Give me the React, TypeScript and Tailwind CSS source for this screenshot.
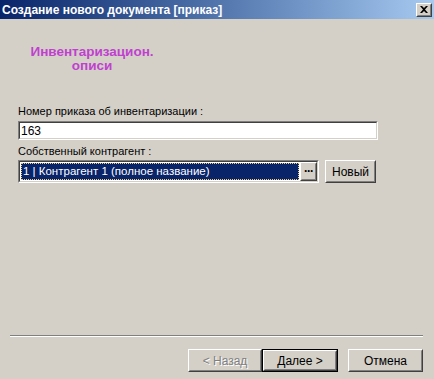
import React from 'react';

const font = { fontFamily: '"Liberation Sans", Arial, sans-serif' };

function Sunken({ className, children }: { className?: string; children: React.ReactNode }) {
    return (
        <div className={`border border-t-[#808080] border-l-[#808080] border-b-white border-r-white ${className ?? ''}`}>
            <div className="h-full border border-t-[#404040] border-l-[#404040] border-b-[#D4D0C8] border-r-[#D4D0C8]">
                {children}
            </div>
        </div>
    );
}

function Raised({ className, children }: { className?: string; children: React.ReactNode }) {
    return (
        <div className={`border border-t-white border-l-white border-b-[#404040] border-r-[#404040] ${className ?? ''}`}>
            <div className="h-full flex items-center justify-center border border-t-[#D4D0C8] border-l-[#D4D0C8] border-b-[#808080] border-r-[#808080]">
                {children}
            </div>
        </div>
    );
}

export default function App() {
    return (
        <div className="w-[434px] h-[379px] bg-[#D4D0C8] flex flex-col text-[11px] text-black" style={font}>
            <div className="h-[19px] flex items-center justify-between pl-[2px] pr-[2px] bg-gradient-to-r from-[#0A246A] to-[#A6CAF0]">
                <span className="text-white font-bold text-[12px] leading-none">Создание нового документа [приказ]</span>
                <Raised className="w-[16px] h-[14px] bg-[#D4D0C8]">
                    <svg width="8" height="7" viewBox="0 0 8 7">
                        <path d="M0 0h2l2 2 2-2h2L5 3.5 8 7H6L4 5 2 7H0l3-3.5z" fill="#000" />
                    </svg>
                </Raised>
            </div>

            <div className="w-[184px] mt-[26px] text-center font-bold text-[13.5px] leading-[14px] text-[#C040D0]">
                <div>Инвентаризацион.</div>
                <div>описи</div>
            </div>

            <div className="px-[18px] mt-[32px]">
                <div className="leading-[13px]">Номер приказа об инвентаризации :</div>
                <Sunken className="mt-[3px] w-[360px] h-[19px]">
                    <div className="h-full bg-white pl-[1px] flex items-center leading-none text-[12px]">163</div>
                </Sunken>

                <div className="leading-[13px] mt-[5px]">Собственный контрагент :</div>
                <div className="mt-[2px] flex items-center gap-[6px]">
                    <Sunken className="w-[301px] h-[23px]">
                        <div className="h-full flex bg-white">
                            <div className="flex-1 m-[1px] bg-[#0A246A] border border-dotted border-[#F0D080] text-white flex items-center pl-[1px] leading-none text-[11.5px]">
                                1 | Контрагент 1 (полное название)
                            </div>
                            <Raised className="w-[17px] h-full bg-[#D4D0C8]">
                                <span className="font-bold leading-none tracking-[-1px] -mt-[2px] text-[12px]">···</span>
                            </Raised>
                        </div>
                    </Sunken>
                    <Raised className="w-[51px] h-[23px] bg-[#D4D0C8]">
                        <span className="leading-none text-[12px]">Новый</span>
                    </Raised>
                </div>
            </div>

            <div className="mt-auto pl-[10px] pr-[11px]">
                <div className="border-t border-t-[#808080] border-b border-b-white" />
            </div>
            <div className="mt-[12px] mb-[7px] pr-[11px] flex justify-end">
                <Raised className="w-[74px] h-[23px] bg-[#D4D0C8]">
                    <span className="text-[#808080] text-[12px] leading-none [text-shadow:1px_1px_0_#fff]">&lt; Назад</span>
                </Raised>
                <div className="border border-black w-[76px] h-[23px]">
                    <Raised className="h-full bg-[#D4D0C8]">
                        <span className="text-[12px] leading-none">Далее &gt;</span>
                    </Raised>
                </div>
                <Raised className="ml-[10px] w-[75px] h-[23px] bg-[#D4D0C8]">
                    <span className="text-[12px] leading-none">Отмена</span>
                </Raised>
            </div>
        </div>
    );
}
